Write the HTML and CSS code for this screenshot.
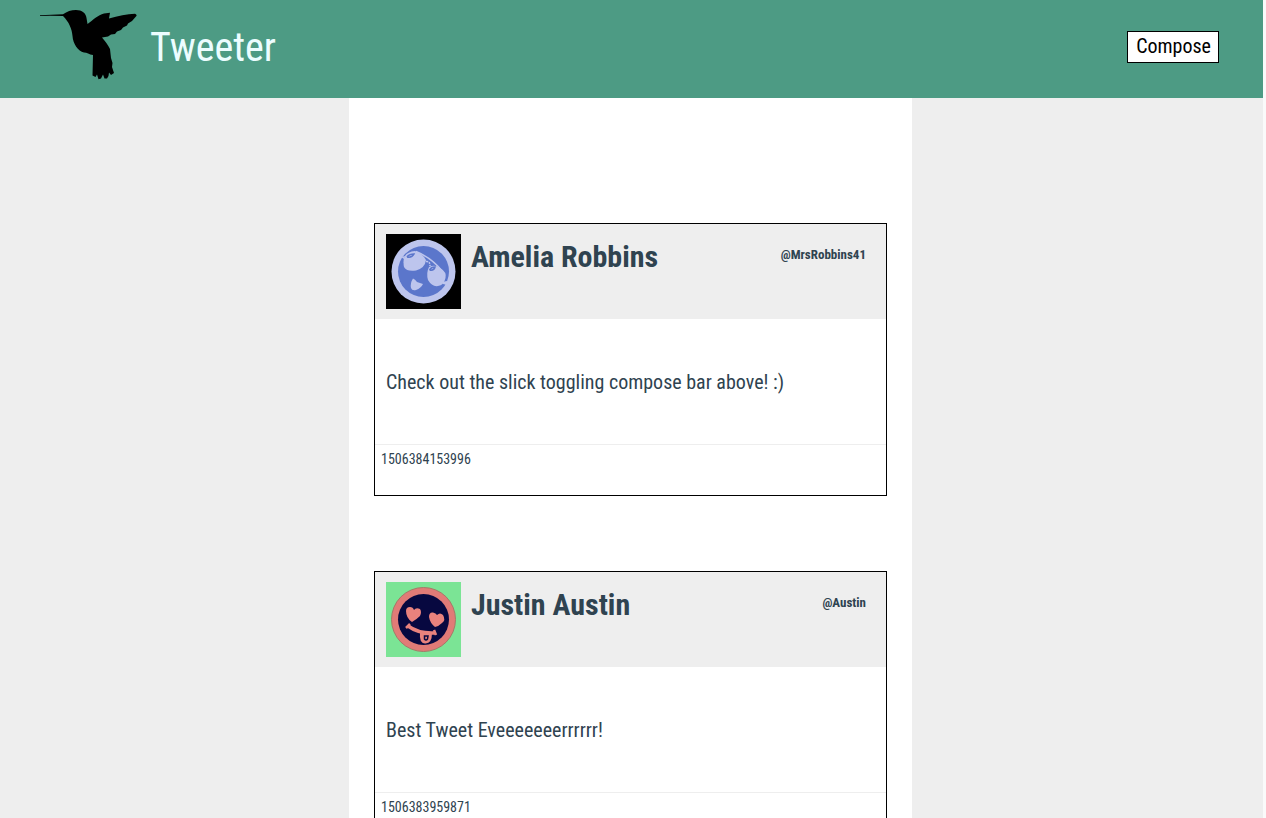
FILE: index.html
```html
<!DOCTYPE html>
<html lang="en">
<head>
<meta charset="utf-8">
<title>Tweeter</title>
<link rel="stylesheet" href="styles.css">
</head>
<body>
<header class="nav">
  <svg class="logo" viewBox="0 0 98 72" aria-hidden="true">
    <path d="M0 6.3L23 5.2C27 2.6 31 1 36 1C42 1 46 4 46.500 9L47.500 15C53 11 58 6 64 4.500L70 3.800L69 9.500C78 7 87 5 95 4.800Q98 6 95.500 8L92 12L88 14.500L87 16.500L83 18.500L81 21L77 22.500L75 25L71 25.500L68 27.500L62 28.500C65 32 68 36 70 40L71 49L72.500 54L72 58L74 64L71 66L69 63.500L68.500 67L67 69.500L64.500 69.500L63 65.500L61 69.500L58.500 70.300L57 65.500L55.500 68L52.500 66.500L53 46C49 45.500 47 43.500 44 43.500C38 42 33 35 32.500 27C32 20 29 13 23 7L10 6.800L0 7Z"/>
  </svg>
  <h1 class="brand">Tweeter</h1>
  <button class="compose" type="button">Compose</button>
</header>
<main class="feed">
  <article class="tweet">
    <header class="tweet-head">
      <svg class="avatar" viewBox="0 0 75 75" role="img" aria-label="Amelia Robbins">
        <rect width="75" height="75" fill="#000"/>
        <circle cx="37.500" cy="37.500" r="32" fill="#bdc5ed"/>
        <circle cx="37.500" cy="37.500" r="25.500" fill="#5b76cb"/>
        <g fill="#bdc5ed">
          <path d="M18 24Q20 18 29 17Q36 19 40 26Q39 34 30 36.500Q21 38 18 33Q17 28 18 24Z"/>
          <path d="M43 33Q49 30 54 34Q61 38 59.500 44Q58 51 52 52Q46 53 42 46Q40 39 43 33Z"/>
          <path d="M27 44.500Q29 45 31 48Q34 49 37 50Q35 54 30 56Q26 57 25 54Q24 49 27 44.500Z"/>
          <path d="M56 48L61 47L61 51L57 50Z"/>
        </g>
        <path d="M30 17.500Q46 24 57 38" fill="none" stroke="#bdc5ed" stroke-width="1.500"/>
        <path d="M40 27.500Q44 27 44 32" fill="none" stroke="#bdc5ed" stroke-width="1.500" stroke-dasharray="2 1"/>
        <g fill="none" stroke="#5b76cb" stroke-width="1.500">
          <path d="M21 23Q23 20 28 20Q26 24 21 23M43.500 36Q45 33 49 33Q48 37 43.500 36"/>
        </g>
        <path d="M15 23L19 22L18 25Z" fill="#bdc5ed"/>
      </svg>
      <h2 class="name">Amelia Robbins</h2>
      <span class="handle">@MrsRobbins41</span>
    </header>
    <p class="text">Check out the slick toggling compose bar above! :)</p>
    <footer class="stamp">1506384153996</footer>
  </article>
  <article class="tweet">
    <header class="tweet-head">
      <svg class="avatar" viewBox="0 0 75 75" role="img" aria-label="Justin Austin">
        <rect width="75" height="75" fill="#7be495"/>
        <circle cx="37.500" cy="37.500" r="32" fill="#e17b77" stroke="#a47a68" stroke-width="1"/>
        <circle cx="37.500" cy="37.500" r="25.500" fill="#070840"/>
        <g fill="#e9827d">
          <path d="M26 40Q20 36 20 29Q20 25 24 25Q27 25 28 28Q30 25 34 27Q36 30 34 34Q31 37 26 40Z"/>
          <path d="M49 45Q44 41 43 35Q43 30 47 30.500Q50 31 51 33Q54 30 57 33Q60 38 56 41Q53 44 49 45Z"/>
        </g>
        <path d="M22 44Q33 52 49 51" fill="none" stroke="#e9827d" stroke-width="3.500"/>
        <path d="M20 46L24 42M48 48L50 53" stroke="#e9827d" stroke-width="2.500"/>
        <path d="M34 51Q33 61 39 61.500Q46 62 46 51Z" fill="#e9827d"/>
        <path d="M38.500 54L38.500 57Q40 59 41.500 57L42 54Z" fill="none" stroke="#070840" stroke-width="1.500"/>
      </svg>
      <h2 class="name">Justin Austin</h2>
      <span class="handle">@Austin</span>
    </header>
    <p class="text">Best Tweet Eveeeeeeerrrrrr!</p>
    <footer class="stamp">1506383959871</footer>
  </article>
</main>
</body>
</html>
```
FILE: styles.css
```css
* {
  box-sizing: border-box;
}

html {
  height: 100%;
  overflow: hidden;
  background: #fafafa;
}

body {
  display: flex;
  flex-direction: column;
  min-height: 100%;
  margin: 0 3px 0 0;
  background: #eee;
  color: #2f4350;
  font-family: "Roboto Condensed", Roboto, sans-serif;
}

.nav {
  display: flex;
  align-items: center;
  gap: 12px;
  height: 98px;
  padding: 0 44px 4px 40px;
  background: #4d9b84;
}

.logo {
  width: 98px;
  height: 72px;
  margin-bottom: 4px;
}

.brand {
  margin: 0;
  padding-top: 2px;
  color: #ecfdff;
  font-size: 40px;
  line-height: 50px;
  font-weight: 400;
}

.compose {
  margin-left: auto;
  padding: 0 7px 2px 8px;
  border: 1px solid #000;
  background: #fff;
  color: #000;
  font: inherit;
  font-size: 20px;
  line-height: 28px;
}

.feed {
  display: flex;
  flex: 1;
  flex-direction: column;
  gap: 75px;
  width: 565px;
  max-width: 100%;
  margin: 0 auto;
  padding: 125px 25px 0;
  border-right: 2px solid #eee;
  background: #fff;
}

.tweet {
  border: 1px solid #000;
}

.tweet-head {
  display: flex;
  gap: 10px;
  padding: 10px 20px 10px 11px;
  background: #eee;
}

.avatar {
  width: 75px;
  height: 75px;
}

.name {
  margin: 5px 0 0;
  font-size: 30px;
  line-height: 36px;
  font-weight: 700;
}

.handle {
  margin: 12px 0 0 auto;
  font-size: 13px;
  line-height: 18px;
  font-weight: 700;
}

.text {
  margin: 0;
  padding: 51px 11px 49px;
  font-size: 20px;
  line-height: 25px;
}

.stamp {
  min-height: 51px;
  padding: 5px 6px;
  border-top: 1px solid #eee;
  font-size: 14px;
  line-height: 18px;
}
```
